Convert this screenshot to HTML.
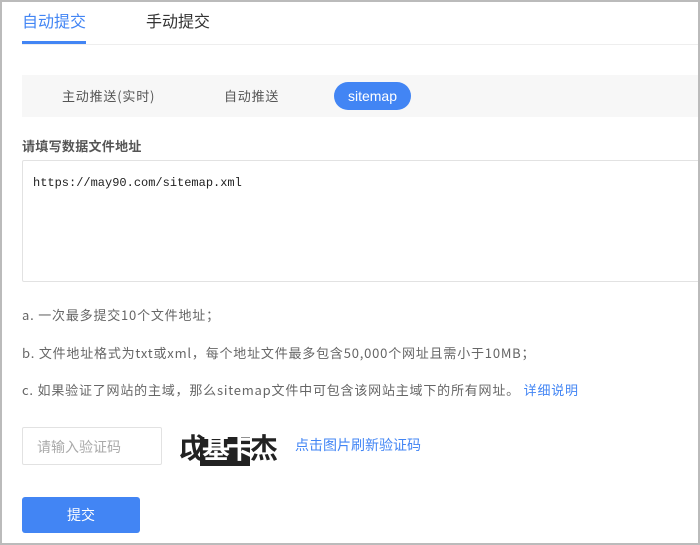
<!DOCTYPE html><html><head><meta charset="utf-8"><style>
*{margin:0;padding:0;box-sizing:border-box}
body{width:700px;height:545px;overflow:hidden;background:#fff;font-family:"Noto Sans CJK SC","Liberation Sans",sans-serif}
.frame{position:absolute;left:0;top:0;width:700px;height:545px;border:2px solid #bbb;z-index:5}
.a{position:absolute;white-space:nowrap;line-height:1}
.t{letter-spacing:0.8px}
</style></head><body>
<div class="frame"></div>
<div class="a" style="left:22px;top:12px;font-size:16px;color:#4285f4">自动提交</div>
<div class="a" style="left:146px;top:12px;font-size:16px;color:#333">手动提交</div>
<div class="a" style="left:22px;top:41px;width:64px;height:3px;background:#4285f4"></div>
<div class="a" style="left:22px;top:44px;width:676px;height:1px;background:#eee"></div>
<div class="a" style="left:22px;top:75px;width:676px;height:42px;background:#f7f7f7"></div>
<div class="a t" style="left:62px;top:89px;font-size:13px;color:#555">主动推送(实时)</div>
<div class="a t" style="left:224px;top:89px;font-size:13px;color:#555">自动推送</div>
<div class="a" style="left:334px;top:82px;width:77px;height:28px;border-radius:14px;background:#4285f4;color:#fff;font-size:14px;line-height:28px;text-align:center;font-family:'Liberation Sans',sans-serif">sitemap</div>
<div class="a t" style="left:22px;top:139px;font-size:13px;font-weight:bold;color:#555;letter-spacing:0.3px">请填写数据文件地址</div>
<div class="a" style="left:22px;top:160px;width:690px;height:122px;border:1px solid #e2e2e2;border-radius:2px"></div>
<div class="a" style="left:33px;top:177px;font-size:12px;font-family:'Liberation Mono',monospace;color:#222">https://may90.com/sitemap.xml</div>
<div class="a t" style="left:22px;top:308px;font-size:13px;color:#666">a. 一次最多提交10个文件地址；</div>
<div class="a t" style="left:22px;top:346px;font-size:13px;color:#666">b. 文件地址格式为txt或xml，每个地址文件最多包含50,000个网址且需小于10MB；</div>
<div class="a t" style="left:22px;top:383px;font-size:13px;color:#666">c. 如果验证了网站的主域，那么sitemap文件中可包含该网站主域下的所有网址。 <span style="color:#4285f4">详细说明</span></div>
<div class="a" style="left:22px;top:427px;width:140px;height:38px;border:1px solid #e2e2e2;border-radius:2px;font-size:14px;color:#aaa;padding:12px 0 0 14px">请输入验证码</div>
<div class="a" style="left:200px;top:437px;width:50px;height:29px;background:#222"></div>
<div class="a" style="left:178px;top:430px;font-size:28px;font-weight:bold;color:#222;letter-spacing:-4px;line-height:34px"><span>戉</span><span style="color:#fff">基</span><span style="color:#fff">卡</span><span>杰</span></div>
<div class="a" style="left:295px;top:438px;font-size:14px;color:#4285f4">点击图片刷新验证码</div>
<div class="a" style="left:22px;top:497px;width:118px;height:36px;border-radius:3px;background:#4285f4;color:#fff;font-size:14px;line-height:36px;text-align:center">提交</div>
</body></html>
